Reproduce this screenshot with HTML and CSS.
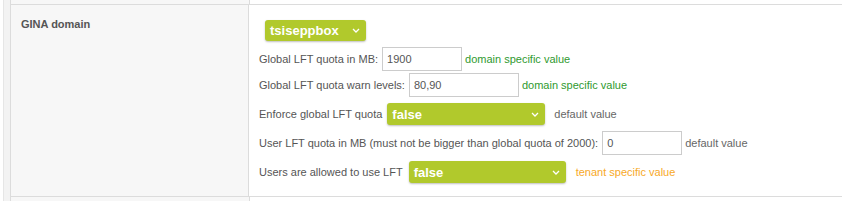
FILE: index.html
```html
<!DOCTYPE html>
<html>
<head>
<meta charset="utf-8">
<link rel="stylesheet" href="styles.css">
</head>
<body>
<div class="page">
  <div class="side"></div>
  <div class="table">
    <div class="filler top">
      <div class="lcell"></div>
      <div class="ccell"></div>
    </div>
    <div class="trow">
      <div class="lcell label-cell">GINA domain</div>
      <div class="ccell content">
        <div class="domain-line">
          <div class="sel sel-domain"><span>tsiseppbox</span><svg class="chev" width="8" height="5" viewBox="0 0 8 5"><path d="M1 1 L4 4 L7 1" fill="none" stroke="#fff" stroke-width="1.3"/></svg></div>
        </div>
        <div class="row r1">
          <span class="lbl">Global LFT quota in MB:</span>
          <input class="inp w80" type="text" value="1900">
          <span class="note green">domain specific value</span>
        </div>
        <div class="row r2">
          <span class="lbl">Global LFT quota warn levels:</span>
          <input class="inp w110" type="text" value="80,90">
          <span class="note green">domain specific value</span>
        </div>
        <div class="row">
          <span class="lbl">Enforce global LFT quota</span>
          <div class="sel sel-wide"><span>false</span><svg class="chev" width="8" height="5" viewBox="0 0 8 5"><path d="M1 1 L4 4 L7 1" fill="none" stroke="#fff" stroke-width="1.3"/></svg></div>
          <span class="note gray sel-note">default value</span>
        </div>
        <div class="row">
          <span class="lbl">User LFT quota in MB (must not be bigger than global quota of 2000):</span>
          <input class="inp w80" type="text" value="0">
          <span class="note gray">default value</span>
        </div>
        <div class="row">
          <span class="lbl">Users are allowed to use LFT</span>
          <div class="sel sel-wide2"><span>false</span><svg class="chev" width="8" height="5" viewBox="0 0 8 5"><path d="M1 1 L4 4 L7 1" fill="none" stroke="#fff" stroke-width="1.3"/></svg></div>
          <span class="note orange sel-note2">tenant specific value</span>
        </div>
      </div>
    </div>
    <div class="filler bottom">
      <div class="lcell"></div>
      <div class="ccell"></div>
    </div>
  </div>
</div>
</body>
</html>
```
FILE: styles.css
```css
html, body {
  margin: 0;
  padding: 0;
  background: #fff;
  font-family: "Liberation Sans", Arial, sans-serif;
  font-size: 11px;
  color: #555;
}
.page {
  display: flex;
  height: 201px;
  overflow: hidden;
}
.side {
  margin-left: 3px;
  width: 6px;
  border-left: 1px solid #e6e6e6;
  border-right: 1px solid #dcdcdc;
  background: #f3f3f3;
  flex: none;
}
.table {
  flex: 1;
  display: flex;
  flex-direction: column;
}
.filler {
  display: flex;
}
.filler.top { height: 4px; }
.filler.bottom { flex: 1; }
.trow {
  display: flex;
  border-top: 1px solid #dcdcdc;
  border-bottom: 1px solid #dcdcdc;
}
.lcell {
  width: 238px;
  flex: none;
  background: #f7f7f7;
  border-right: 1px solid #dcdcdc;
}
.ccell {
  flex: 1;
  background: #fff;
}
.label-cell {
  box-sizing: border-box;
  padding: 13px 0 0 10px;
  font-weight: bold;
  color: #555;
}
.content {
  padding: 15px 0 13px 10px;
}
.domain-line {
  display: flex;
  padding-left: 6px;
}
.sel {
  box-sizing: border-box;
  height: 22px;
  background: #b1c92c;
  border-radius: 3px;
  box-shadow: 0 1px 2px rgba(0,0,0,0.25);
  color: #fff;
  font-weight: bold;
  font-size: 13px;
  display: flex;
  align-items: center;
  justify-content: space-between;
  padding: 0 6px 0 5px;
}
.sel-domain { width: 101px; height: 21px; }
.sel-wide { width: 158px; margin-left: 5px; }
.sel-wide2 { width: 157px; margin-left: 6px; }
.chev { flex: none; }
.row {
  display: flex;
  align-items: center;
  margin-top: 6px;
}
.row.r2 { margin-top: 2px; }
.inp {
  box-sizing: border-box;
  height: 24px;
  border: 1px solid #cccccc;
  border-radius: 0;
  padding: 0 4px;
  margin: 0 0 0 4px;
  font-family: "Liberation Sans", Arial, sans-serif;
  font-size: 11px;
  color: #555;
  background: #fff;
  outline: none;
}
.w80 { width: 80px; }
.w110 { width: 110px; }
.note { margin-left: 3px; }
.sel-note { margin-left: 9px; }
.sel-note2 { margin-left: 10px; }
.green { color: #2f9a2f; }
.gray { color: #666; }
.orange { color: #f7a928; }
```
